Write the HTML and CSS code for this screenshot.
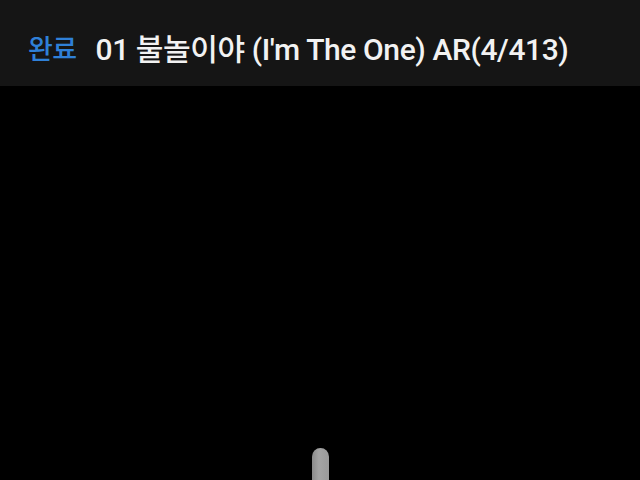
FILE: index.html
```html
<!DOCTYPE html>
<html>
<head>
<meta charset="utf-8">
<link rel="stylesheet" href="styles.css">
</head>
<body>
<div class="screen">
  <header class="bar">
    <span class="done">완료</span>
    <span class="title">01 불놀이야 (I'm The One) AR(4/413)</span>
  </header>
  <main class="content">
    <div class="handle"></div>
  </main>
</div>
</body>
</html>
```
FILE: styles.css
```css
html, body {
  margin: 0;
  padding: 0;
  background: #000;
}
.screen {
  width: 640px;
  height: 480px;
  display: flex;
  flex-direction: column;
  overflow: hidden;
}
.bar {
  height: 86px;
  flex: none;
  background: #151515;
  display: flex;
  align-items: center;
  padding: 8px 0 0 28px;
  box-sizing: border-box;
  font-family: Roboto, "Noto Sans CJK KR", sans-serif;
  font-weight: 500;
}
.done {
  color: #2f80d8;
  font-size: 27px;
  letter-spacing: -0.6px;
  margin-right: 19px;
}
.title {
  color: #f2f2f2;
  font-size: 30px;
  letter-spacing: -0.4px;
}
.content {
  flex: 1;
  background: #000;
  display: flex;
  justify-content: center;
  align-items: flex-end;
}
.handle {
  width: 17px;
  height: 32px;
  border-radius: 9px 9px 0 0;
  background: linear-gradient(to right, #8a8a8a, #a4a4a4 40%, #9a9a9a);
  margin-left: 1px;
}
```
